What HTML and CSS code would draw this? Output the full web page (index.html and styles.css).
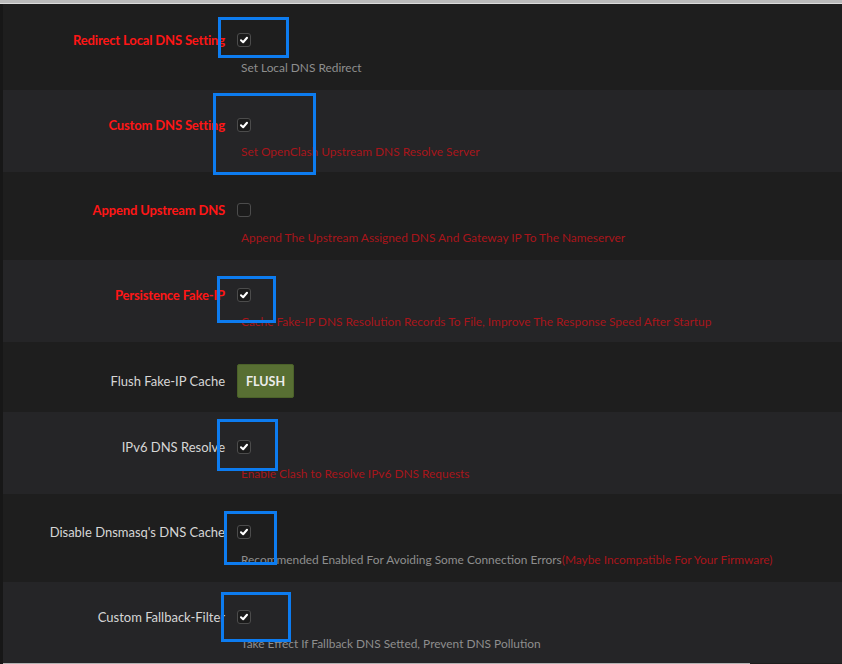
FILE: index.html
```html
<!DOCTYPE html>
<html lang="en">
<head>
<meta charset="utf-8">
<title>DNS Settings</title>
<link rel="stylesheet" href="styles.css">
</head>
<body>
<div class="topbar"></div>
<main class="page">
  <section class="row">
    <div class="label warn">Redirect Local DNS Setting</div>
    <div class="ctrl"><span class="cb on"><svg viewBox="0 0 14 14"><path d="M3.5 7.3 L6 9.6 L10.5 4.4"/></svg></span></div>
    <div class="desc">Set Local DNS Redirect</div>
  </section>
  <section class="row">
    <div class="label warn">Custom DNS Setting</div>
    <div class="ctrl"><span class="cb on"><svg viewBox="0 0 14 14"><path d="M3.5 7.3 L6 9.6 L10.5 4.4"/></svg></span></div>
    <div class="desc red">Set OpenClash Upstream DNS Resolve Server</div>
  </section>
  <section class="row">
    <div class="label warn">Append Upstream DNS</div>
    <div class="ctrl"><span class="cb"></span></div>
    <div class="desc red">Append The Upstream Assigned DNS And Gateway IP To The Nameserver</div>
  </section>
  <section class="row">
    <div class="label warn">Persistence Fake-IP</div>
    <div class="ctrl"><span class="cb on"><svg viewBox="0 0 14 14"><path d="M3.5 7.3 L6 9.6 L10.5 4.4"/></svg></span></div>
    <div class="desc red">Cache Fake-IP DNS Resolution Records To File, Improve The Response Speed After Startup</div>
  </section>
  <section class="row row-action">
    <div class="label">Flush Fake-IP Cache</div>
    <div class="ctrl"><button class="btn">FLUSH</button></div>
  </section>
  <section class="row">
    <div class="label">IPv6 DNS Resolve</div>
    <div class="ctrl"><span class="cb on"><svg viewBox="0 0 14 14"><path d="M3.5 7.3 L6 9.6 L10.5 4.4"/></svg></span></div>
    <div class="desc red">Enable Clash to Resolve IPv6 DNS Requests</div>
  </section>
  <section class="row">
    <div class="label">Disable Dnsmasq's DNS Cache</div>
    <div class="ctrl"><span class="cb on"><svg viewBox="0 0 14 14"><path d="M3.5 7.3 L6 9.6 L10.5 4.4"/></svg></span></div>
    <div class="desc">Recommended Enabled For Avoiding Some Connection Errors<span class="red">(Maybe Incompatible For Your Firmware)</span></div>
  </section>
  <section class="row">
    <div class="label">Custom Fallback-Filter</div>
    <div class="ctrl"><span class="cb on"><svg viewBox="0 0 14 14"><path d="M3.5 7.3 L6 9.6 L10.5 4.4"/></svg></span></div>
    <div class="desc">Take Effect If Fallback DNS Setted, Prevent DNS Pollution</div>
  </section>
  <div class="hscroll"></div>
</main>

<div class="mark m1"></div>
<div class="mark m2"></div>
<div class="mark m3"></div>
<div class="mark m4"></div>
<div class="mark m5"></div>
<div class="mark m6"></div>
</body>
</html>
```

FILE: styles.css
```css
* { box-sizing: border-box; }

html, body {
  margin: 0;
  padding: 0;
  background: #1e1e1e;
  height: 664px;
  overflow: hidden;
}

body {
  position: relative;
  font-family: Lato, "Open Sans", sans-serif;
}

.topbar {
  height: 4px;
  background: #bababa;
  border-bottom: 1px solid #dcdcdc;
}

.page {
  border-left: 3px solid #171717;
}

.row {
  display: grid;
  grid-template-columns: 222px 1fr;
  column-gap: 12px;
  row-gap: 14px;
  align-items: center;
  padding: 31px 0 15px;
  background: #1e1e1e;
}

.row:nth-child(even) {
  background: #252527;
  padding: 28px 0 13px;
  row-gap: 13px;
}

.row:first-child {
  padding: 29px 0 15px;
}

.row:nth-last-child(2) {
  padding-bottom: 12px;
}

.row-action {
  padding: 22px 0 14px;
}

.label {
  text-align: right;
  font-size: 13px;
  line-height: 14px;
  color: #d6d6d6;
  white-space: nowrap;
}

.label.warn {
  color: #ff1616;
  font-weight: 700;
  letter-spacing: -0.15px;
}

.ctrl {
  display: flex;
  align-items: center;
  height: 14px;
}

.row-action .ctrl {
  height: 34px;
}

.cb {
  width: 14px;
  height: 14px;
  border: 1px solid #4c4c4c;
  border-radius: 3px;
  background: #1b1b1b;
  display: flex;
  align-items: center;
  justify-content: center;
}

.cb svg {
  width: 14px;
  height: 14px;
  fill: none;
  stroke: #ffffff;
  stroke-width: 2.4;
  stroke-linecap: round;
  stroke-linejoin: round;
}

.desc {
  grid-column: 2;
  padding-left: 4px;
  font-size: 11.9px;
  line-height: 14px;
  color: #8e8e8e;
  white-space: nowrap;
}

.red {
  color: #a8151b;
}

.btn {
  width: 57px;
  height: 34px;
  padding: 0;
  border: 1px solid #4b6129;
  border-radius: 2px;
  background: #586f33;
  color: #ececec;
  font-family: Lato, sans-serif;
  font-size: 12.5px;
  font-weight: 700;
}

.hscroll {
  width: 747px;
  height: 2px;
  background: #b2b2b2;
}

.mark {
  position: absolute;
  border: 3px solid #0d7cf0;
}

.m1 { left: 218px; top: 17px; width: 71px; height: 41px; }
.m2 { left: 213px; top: 93px; width: 103px; height: 82px; }
.m3 { left: 217px; top: 276px; width: 59px; height: 47px; }
.m4 { left: 217px; top: 419px; width: 61px; height: 52px; }
.m5 { left: 224px; top: 511px; width: 53px; height: 54px; }
.m6 { left: 221px; top: 592px; width: 70px; height: 50px; }
```
